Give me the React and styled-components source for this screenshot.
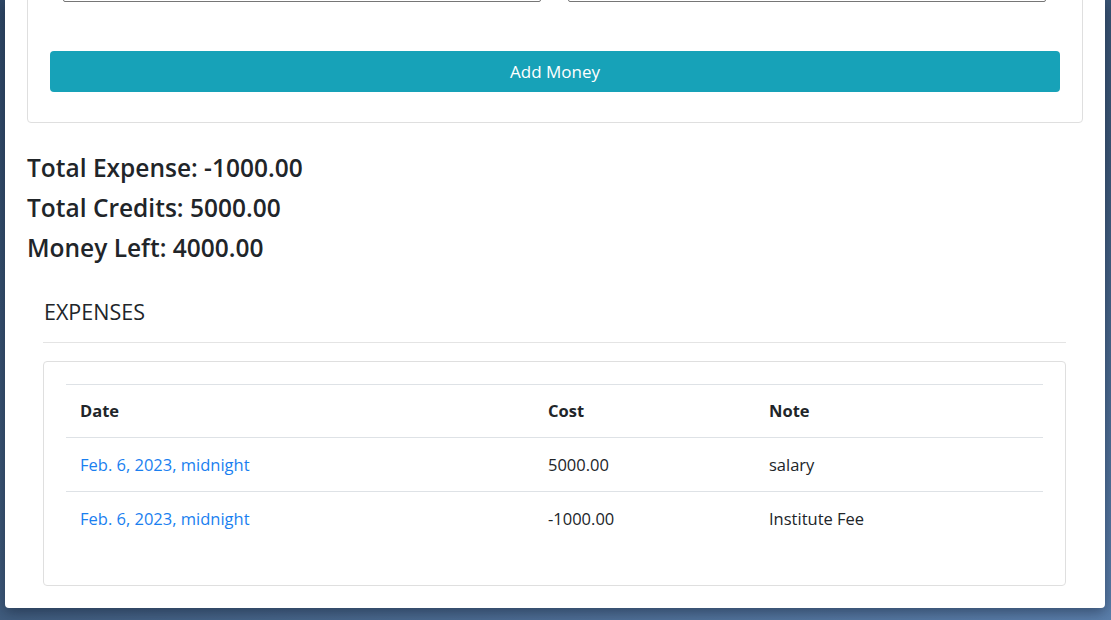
import React from "react";
import styled, { createGlobalStyle } from "styled-components";

const GlobalStyle = createGlobalStyle`
  html, body {
    margin: 0;
    height: 620px;
    overflow: hidden;
  }
  body {
    background: linear-gradient(160deg, #2f4866 0%, #3d5878 55%, #5b7fab 100%);
    font-family: "Open Sans", "Noto Sans", sans-serif;
    color: #212529;
  }
`;

const expenses = [
  { date: "Feb. 6, 2023, midnight", cost: "5000.00", note: "salary" },
  { date: "Feb. 6, 2023, midnight", cost: "-1000.00", note: "Institute Fee" },
];

export default function App() {
  return (
    <>
      <GlobalStyle />
      <Window>
        <Container>
          <FormCard>
            <InputRow>
              <Input type="text" aria-label="Amount" />
              <Input type="text" aria-label="Note" />
            </InputRow>
            <SubmitButton type="button">Add Money</SubmitButton>
          </FormCard>

          <Totals>
            <TotalLine>Total Expense: -1000.00</TotalLine>
            <TotalLine>Total Credits: 5000.00</TotalLine>
            <TotalLine>Money Left: 4000.00</TotalLine>
          </Totals>

          <Section>
            <SectionTitle>EXPENSES</SectionTitle>
            <TableCard>
              <Table>
                <colgroup>
                  <col style={{ width: 468 }} />
                  <col style={{ width: 221 }} />
                  <col />
                </colgroup>
                <thead>
                  <tr>
                    <Th>Date</Th>
                    <Th>Cost</Th>
                    <Th>Note</Th>
                  </tr>
                </thead>
                <tbody>
                  {expenses.map((e, i) => (
                    <Row key={i} last={i === expenses.length - 1}>
                      <Td>
                        <DateLink href="#">{e.date}</DateLink>
                      </Td>
                      <Td>{e.cost}</Td>
                      <Td>{e.note}</Td>
                    </Row>
                  ))}
                </tbody>
              </Table>
            </TableCard>
          </Section>
        </Container>
      </Window>
    </>
  );
}

const Window = styled.div`
  margin-left: 5px;
  width: 1100px;
  height: 608px;
  background: #fff;
  overflow: hidden;
  border-radius: 0 0 4px 4px;
  box-shadow: 0 4px 14px rgba(10, 20, 40, 0.45);
`;

const Container = styled.div`
  padding: 0 22px;
`;

const FormCard = styled.div`
  margin-top: -53px;
  border: 1px solid #dfdfdf;
  border-radius: 4px;
  padding: 22px 22px 30px;
`;

const InputRow = styled.div`
  display: grid;
  grid-template-columns: 1fr 1fr;
  gap: 27px;
  padding: 0 14px 0 13px;
  margin-bottom: 49px;
`;

const Input = styled.input`
  height: 32px;
  box-sizing: border-box;
  border: 1px solid #767676;
  border-radius: 2px;
`;

const SubmitButton = styled.button`
  display: block;
  width: 100%;
  height: 41px;
  border: none;
  border-radius: 4px;
  background: #17a2b8;
  color: #fff;
  font-family: inherit;
  font-size: 17px;
  cursor: pointer;
`;

const Totals = styled.div`
  margin-top: 25px;
`;

const TotalLine = styled.h4`
  margin: 0;
  font-size: 24.5px;
  font-weight: 600;
  line-height: 40px;
`;

const Section = styled.div`
  margin: 0 17px 0 16px;
`;

const SectionTitle = styled.div`
  padding: 32px 1px 18px;
  font-size: 21.5px;
  line-height: 24px;
  border-bottom: 1px solid #e4e4e4;
`;

const TableCard = styled.div`
  margin-top: 18px;
  border: 1px solid #dfdfdf;
  border-radius: 4px;
  padding: 22px;
`;

const Table = styled.table`
  width: 100%;
  border-collapse: collapse;
  table-layout: fixed;
  margin-bottom: 18px;
  font-size: 16.5px;
  line-height: 24px;
`;

const Th = styled.th`
  text-align: left;
  font-weight: 700;
  padding: 14px;
  border-top: 1px solid #dee2e6;
  border-bottom: 1px solid #dee2e6;
`;

const Row = styled.tr`
  border-bottom: ${(p) => (p.last ? "none" : "1px solid #dee2e6")};
`;

const Td = styled.td`
  padding: 14.5px 14px;
`;

const DateLink = styled.a`
  color: #1a7ff0;
  text-decoration: none;
`;
